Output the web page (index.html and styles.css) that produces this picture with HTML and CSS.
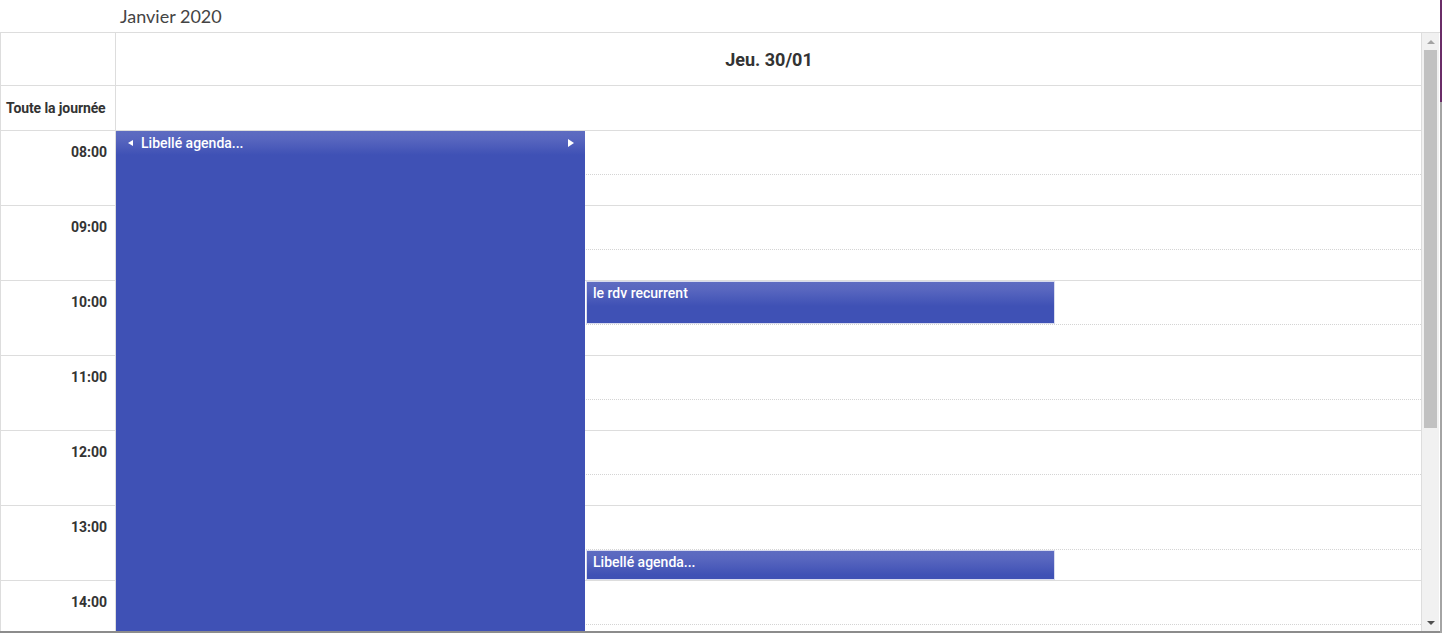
FILE: index.html
```html
<!DOCTYPE html>
<html lang="fr">
<head>
<meta charset="utf-8">
<title>Agenda – Janvier 2020</title>
<link rel="stylesheet" href="styles.css">
</head>
<body>
<div class="screen">
  <div class="page">
    <div class="title">Janvier 2020</div>
    <div class="calendar">
      <div class="cal-main">
        <div class="head-row">
          <div class="corner"></div>
          <div class="day-head">Jeu. 30/01</div>
        </div>
        <div class="allday-row">
          <div class="allday-label">Toute la journée</div>
          <div class="allday-cell"></div>
        </div>
        <div class="cal-body">
          <div class="hour"><div class="time">08:00</div><div class="slots"><div class="slot-a"></div><div class="slot-b"></div></div></div>
          <div class="hour"><div class="time">09:00</div><div class="slots"><div class="slot-a"></div><div class="slot-b"></div></div></div>
          <div class="hour"><div class="time">10:00</div><div class="slots"><div class="slot-a"></div><div class="slot-b"></div></div></div>
          <div class="hour"><div class="time">11:00</div><div class="slots"><div class="slot-a"></div><div class="slot-b"></div></div></div>
          <div class="hour"><div class="time">12:00</div><div class="slots"><div class="slot-a"></div><div class="slot-b"></div></div></div>
          <div class="hour"><div class="time">13:00</div><div class="slots"><div class="slot-a"></div><div class="slot-b"></div></div></div>
          <div class="hour"><div class="time">14:00</div><div class="slots"><div class="slot-a"></div><div class="slot-b"></div></div></div>

          <div class="events">
            <div class="event event-long" style="top:0;height:640px;left:0">
              <div class="event-head">
                <span class="arrow-left"></span>
                <span class="event-title">Libellé agenda...</span>
                <span class="arrow-right"></span>
              </div>
            </div>
            <div class="event" style="top:150px;height:43px;left:470px">
              <div class="event-head"><span class="event-title">le rdv recurrent</span></div>
            </div>
            <div class="event" style="top:419px;height:30px;left:470px">
              <div class="event-head"><span class="event-title">Libellé agenda...</span></div>
            </div>
          </div>
        </div>
      </div>
      <div class="scrollbar">
        <div class="sb-up"></div>
        <div class="sb-track"><div class="sb-thumb"></div></div>
        <div class="sb-down"></div>
      </div>
    </div>
    <div class="bottom-edge"></div>
  </div>
  <div class="side-edge"><div class="side-accent"></div></div>
</div>
</body>
</html>
```

FILE: styles.css
```css
html, body {
  margin: 0;
  padding: 0;
  background: #fff;
}

.screen {
  display: flex;
  width: 1442px;
  height: 633px;
  overflow: hidden;
}

.page {
  width: 1440px;
  display: flex;
  flex-direction: column;
}

.side-edge {
  width: 2px;
  background: #a4a4a4;
}

.side-accent {
  height: 102px;
  background: #6a2c68;
}

.title {
  height: 32px;
  line-height: 32px;
  padding-left: 120px;
  font-family: Lato, "Liberation Sans", sans-serif;
  font-size: 18px;
  color: #444;
  box-sizing: border-box;
}

.calendar {
  display: flex;
  height: 599px;
  border-top: 1px solid #ddd;
  box-sizing: border-box;
  font-family: Roboto, "Liberation Sans", sans-serif;
  color: #333;
}

.cal-main {
  width: 1422px;
  border-left: 1px solid #ddd;
  border-right: 1px solid #ddd;
  box-sizing: border-box;
  display: flex;
  flex-direction: column;
  overflow: hidden;
}

.head-row {
  display: grid;
  grid-template-columns: 115px 1fr;
  height: 53px;
  border-bottom: 1px solid #ddd;
  box-sizing: border-box;
  flex: none;
}

.corner {
  border-right: 1px solid #ddd;
}

.day-head {
  display: flex;
  align-items: center;
  justify-content: center;
  font-size: 18px;
  font-weight: 700;
  color: #333;
  padding-left: 1px;
}

.allday-row {
  display: grid;
  grid-template-columns: 115px 1fr;
  height: 45px;
  border-bottom: 1px solid #ddd;
  box-sizing: border-box;
  flex: none;
}

.allday-label {
  border-right: 1px solid #ddd;
  display: flex;
  align-items: center;
  padding-left: 5px;
  font-size: 14px;
  font-weight: 700;
  color: #333;
  white-space: nowrap;
  letter-spacing: -0.1px;
}

.cal-body {
  position: relative;
  flex: 1;
  overflow: hidden;
}

.hour {
  display: grid;
  grid-template-columns: 115px 1fr;
  height: 75px;
  border-bottom: 1px solid #ddd;
  box-sizing: border-box;
}

.time {
  border-right: 1px solid #ddd;
  height: 74px;
  line-height: 43px;
  text-align: right;
  padding-right: 8px;
  font-size: 14px;
  font-weight: 700;
  color: #333;
  box-sizing: border-box;
}

.slot-a {
  height: 43px;
  border-bottom: 1px dotted #d4d4d4;
}

.slot-b {
  height: 30px;
}

.events {
  position: absolute;
  top: 0;
  left: 115px;
  right: 0;
  bottom: 0;
}

.event {
  position: absolute;
  width: 469px;
  background: #3f51b5;
  border: 1px solid #d8dbee;
  box-sizing: border-box;
  color: #fff;
  border-radius: 1px;
  overflow: hidden;
}

.event-long {
  border: none;
}

.event-long .event-head {
  padding-left: 7px;
  padding-right: 7px;
  height: 25px;
  padding-bottom: 1px;
}

.event-head {
  display: flex;
  align-items: center;
  height: 24px;
  padding: 0 6px;
  padding-bottom: 2px;
  background: linear-gradient(#5e6cc1, #5866bf 8px, #3f51b5 24px);
  box-sizing: border-box;
}

.event-title {
  font-size: 14px;
  font-weight: 500;
  flex: 1;
  white-space: nowrap;
}

.arrow-left {
  width: 0;
  height: 0;
  border-top: 3px solid transparent;
  border-bottom: 3px solid transparent;
  border-right: 5px solid #fff;
  margin: 0 8px 0 5px;
}

.arrow-right {
  width: 0;
  height: 0;
  border-top: 4px solid transparent;
  border-bottom: 4px solid transparent;
  border-left: 6px solid #fff;
  margin-right: 4px;
}

.scrollbar {
  width: 17px;
  background: #f1f1f1;
  display: flex;
  flex-direction: column;
  align-items: center;
}

.sb-up, .sb-down {
  height: 17px;
  width: 17px;
  display: flex;
  align-items: center;
  justify-content: center;
  flex: none;
}

.sb-up::before {
  content: "";
  border-left: 4px solid transparent;
  border-right: 4px solid transparent;
  border-bottom: 4px solid #a3a3a3;
}

.sb-down::before {
  content: "";
  border-left: 4px solid transparent;
  border-right: 4px solid transparent;
  border-top: 4px solid #505050;
}

.sb-track {
  flex: 1;
  width: 100%;
  display: flex;
  justify-content: center;
}

.sb-thumb {
  width: 13px;
  height: 378px;
  background: #c1c1c1;
}

.bottom-edge {
  height: 2px;
  background: #8c8c8c;
}
```
